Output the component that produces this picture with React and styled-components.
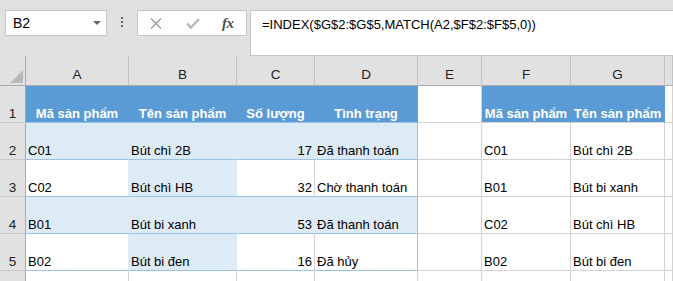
import React from 'react';
import styled, { createGlobalStyle } from 'styled-components';

const Global = createGlobalStyle`
  html, body { margin: 0; padding: 0; background: #fff; overflow: hidden; }
  body { font-family: "Liberation Sans", Arial, sans-serif; }
`;

const BLUE = '#5b9bd5';
const LIGHT = '#ddebf7';
const LINE = '#9bc2e6';
const GRID = '#d4d4d4';
const CHROME = '#e1e1e1';

const Page = styled.div`
  width: 673px;
  height: 281px;
  overflow: hidden;
  display: flex;
  flex-direction: column;
  background: #fff;
`;

const Toolbar = styled.div`
  display: flex;
  align-items: flex-start;
  height: 56px;
  box-sizing: border-box;
  padding: 10px 0 0 5px;
  background: ${CHROME};
  flex-shrink: 0;
`;

const NameBox = styled.div`
  width: 102px;
  height: 26px;
  box-sizing: border-box;
  border: 1px solid #c6c6c6;
  background: #fff;
  display: flex;
  align-items: center;
  padding: 0 5px 0 7px;
  font-size: 14px;
  color: #000;
`;

const DropArrow = styled.span`
  margin-left: auto;
  width: 0;
  height: 0;
  border-left: 4px solid transparent;
  border-right: 4px solid transparent;
  border-top: 4px solid #666;
`;

const Grip = styled.div`
  margin: 7px 0 0 14px;
  display: flex;
  flex-direction: column;
  gap: 2px;
`;

const GripDot = styled.span`
  width: 2px;
  height: 2px;
  background: #666;
`;

const FxBox = styled.div`
  margin-left: 14px;
  width: 110px;
  height: 26px;
  box-sizing: border-box;
  border: 1px solid #c6c6c6;
  background: #fff;
  display: flex;
  align-items: center;
  padding-left: 12px;
`;

const FxIconSlot = styled.span`
  display: flex;
  align-items: center;
  margin-left: ${p => p.$ml || 0}px;
`;

const FxText = styled.span`
  font-family: "Liberation Serif", "Times New Roman", serif;
  font-style: italic;
  font-weight: 700;
  font-size: 15px;
  color: #505050;
  letter-spacing: -0.5px;
  line-height: 1;
`;

const FormulaBox = styled.div`
  margin-left: 3px;
  flex: 1;
  height: 46px;
  box-sizing: border-box;
  border: 1px solid #c6c6c6;
  border-right: none;
  background: #fff;
  padding: 6px 0 0 11px;
  font-size: 13px;
  line-height: 16px;
  color: #000;
  white-space: nowrap;
`;

const Sheet = styled.div`
  display: grid;
  grid-template-columns: 26px 103px 108px 78px 103px 64px 89px 94px 1fr;
  grid-template-rows: 30px repeat(6, 37px);
`;

const Corner = styled.div`
  background: ${CHROME};
  box-sizing: border-box;
  border-right: 1px solid #ababab;
  border-bottom: 1px solid #ababab;
  display: flex;
  align-items: flex-end;
  justify-content: flex-end;
  padding: 0 2px 2px 0;
`;

const ColHead = styled.div`
  background: ${CHROME};
  box-sizing: border-box;
  border-right: 1px solid #c2c2c2;
  border-bottom: 1px solid #ababab;
  display: flex;
  align-items: flex-end;
  justify-content: center;
  padding-bottom: 2px;
  font-size: 13.5px;
  line-height: 16px;
  color: #222;
`;

const RowHead = styled.div`
  background: ${CHROME};
  box-sizing: border-box;
  border-right: 1px solid #ababab;
  border-bottom: 1px solid #c8c8c8;
  display: flex;
  align-items: flex-end;
  justify-content: center;
  font-size: 13.5px;
  line-height: 16px;
  color: #222;
`;

const Cell = styled.div`
  box-sizing: border-box;
  background: ${p => p.$fill || '#fff'};
  border-right: 1px solid ${p => p.$rb || GRID};
  border-bottom: 1px solid ${p => p.$bb || GRID};
  display: flex;
  align-items: flex-end;
  justify-content: ${p => (p.$align === 'center' ? 'center' : p.$align === 'right' ? 'flex-end' : 'flex-start')};
  padding: 0 2px;
  font-size: 13px;
  line-height: 16px;
  font-weight: ${p => (p.$bold ? 700 : 400)};
  color: ${p => p.$color || '#000'};
  white-space: nowrap;
  overflow: visible;
`;

const cols = ['A', 'B', 'C', 'D', 'E', 'F', 'G', ''];

const hdr = (text) => ({ text, fill: BLUE, rb: BLUE, bb: LINE, align: 'center', bold: true, color: '#fff' });
const white = (text = '', align) => ({ text, align });

const banded = (a, b, c, d) => [
  { text: a, fill: LIGHT, rb: LIGHT, bb: LINE },
  { text: b, fill: LIGHT, rb: LIGHT, bb: LINE },
  { text: c, fill: LIGHT, rb: LIGHT, bb: LINE, align: 'right' },
  { text: d, fill: LIGHT, rb: LINE, bb: LINE },
];
const plain = (a, b, c, d) => [
  { text: a, rb: LIGHT, bb: LINE },
  { text: b, fill: LIGHT, rb: LIGHT, bb: LINE },
  { text: c, bb: LINE, align: 'right' },
  { text: d, rb: LINE, bb: LINE },
];

const rows = [
  [
    hdr('Mã sản phẩm'), hdr('Tên sản phẩm'), hdr('Số lượng'), hdr('Tình trạng'),
    white(),
    { ...hdr('Mã sản phẩm'), bb: GRID }, { ...hdr('Tên sản phẩm'), bb: GRID },
    white(),
  ],
  [...banded('C01', 'Bút chì 2B', '17', 'Đã thanh toán'), white(), white('C01'), white('Bút chì 2B'), white()],
  [...plain('C02', 'Bút chì HB', '32', 'Chờ thanh toán'), white(), white('B01'), white('Bút bi xanh'), white()],
  [...banded('B01', 'Bút bi xanh', '53', 'Đã thanh toán'), white(), white('C02'), white('Bút chì HB'), white()],
  [...plain('B02', 'Bút bi đen', '16', 'Đã hủy'), white(), white('B02'), white('Bút bi đen'), white()],
  [white(), white(), white(), white(), white(), white(), white(), white()],
];

export default function App() {
  return (
    <Page>
      <Global />
      <Toolbar>
        <NameBox>
          B2
          <DropArrow />
        </NameBox>
        <Grip>
          <GripDot />
          <GripDot />
          <GripDot />
        </Grip>
        <FxBox>
          <FxIconSlot>
            <svg width="12" height="11" viewBox="0 0 12 11">
              <path d="M1 0.5 L11 10.5 M11 0.5 L1 10.5" stroke="#9c9c9c" strokeWidth="1.3" fill="none" />
            </svg>
          </FxIconSlot>
          <FxIconSlot $ml={24}>
            <svg width="14" height="11" viewBox="0 0 14 11">
              <path d="M1 5.5 L5 9.5 L13 1" stroke="#b5b5b5" strokeWidth="2.4" fill="none" />
            </svg>
          </FxIconSlot>
          <FxIconSlot $ml={22}>
            <FxText>fx</FxText>
          </FxIconSlot>
        </FxBox>
        <FormulaBox>=INDEX($G$2:$G$5,MATCH(A2,$F$2:$F$5,0))</FormulaBox>
      </Toolbar>
      <Sheet>
        <Corner>
          <svg width="13" height="13" viewBox="0 0 13 13">
            <polygon points="13,0 13,13 0,13" fill="#b9b9b9" />
          </svg>
        </Corner>
        {cols.map((c, i) => (
          <ColHead key={'h' + i}>{c}</ColHead>
        ))}
        {rows.map((r, ri) => (
          <React.Fragment key={'r' + ri}>
            <RowHead>{ri + 1}</RowHead>
            {r.map((cell, ci) => (
              <Cell
                key={ci}
                $fill={cell.fill}
                $rb={cell.rb}
                $bb={cell.bb}
                $align={cell.align}
                $bold={cell.bold}
                $color={cell.color}
              >
                {cell.text}
              </Cell>
            ))}
          </React.Fragment>
        ))}
      </Sheet>
    </Page>
  );
}
